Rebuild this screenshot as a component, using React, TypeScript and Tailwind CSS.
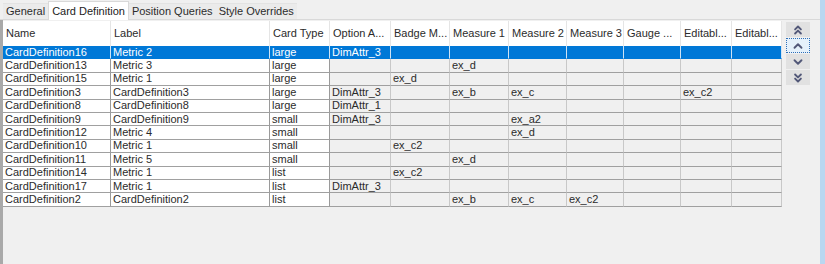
import { ChevronUp, ChevronDown, ChevronsUp, ChevronsDown } from 'lucide-react';

const columns = [
    { title: 'Name', width: 108, editable: true },
    { title: 'Label', width: 159, editable: true },
    { title: 'Card Type', width: 60, editable: true },
    { title: 'Option A...', width: 61, editable: false },
    { title: 'Badge M...', width: 59, editable: false },
    { title: 'Measure 1', width: 59, editable: false },
    { title: 'Measure 2', width: 58, editable: false },
    { title: 'Measure 3', width: 57, editable: false },
    { title: 'Gauge ...', width: 57, editable: false },
    { title: 'Editabl...', width: 51, editable: false },
    { title: 'Editabl...', width: 50, editable: false }
];

const rows: string[][] = [
    ['CardDefinition16', 'Metric 2', 'large', 'DimAttr_3', '', '', '', '', '', '', ''],
    ['CardDefinition13', 'Metric 3', 'large', '', '', 'ex_d', '', '', '', '', ''],
    ['CardDefinition15', 'Metric 1', 'large', '', 'ex_d', '', '', '', '', '', ''],
    ['CardDefinition3', 'CardDefinition3', 'large', 'DimAttr_3', '', 'ex_b', 'ex_c', '', '', 'ex_c2', ''],
    ['CardDefinition8', 'CardDefinition8', 'large', 'DimAttr_1', '', '', '', '', '', '', ''],
    ['CardDefinition9', 'CardDefinition9', 'small', 'DimAttr_3', '', '', 'ex_a2', '', '', '', ''],
    ['CardDefinition12', 'Metric 4', 'small', '', '', '', 'ex_d', '', '', '', ''],
    ['CardDefinition10', 'Metric 1', 'small', '', 'ex_c2', '', '', '', '', '', ''],
    ['CardDefinition11', 'Metric 5', 'small', '', '', 'ex_d', '', '', '', '', ''],
    ['CardDefinition14', 'Metric 1', 'list', '', 'ex_c2', '', '', '', '', '', ''],
    ['CardDefinition17', 'Metric 1', 'list', 'DimAttr_3', '', '', '', '', '', '', ''],
    ['CardDefinition2', 'CardDefinition2', 'list', '', '', 'ex_b', 'ex_c', 'ex_c2', '', '', '']
];

const tabs = ['General', 'Card Definition', 'Position Queries', 'Style Overrides'];

const gridCols =
    'grid-cols-[108px_159px_60px_61px_59px_59px_58px_57px_57px_51px_50px]';

const App = () => {
    return (
        <div
            className="relative h-[264px] w-[825px] overflow-hidden bg-[#f0f0f0] text-[11px] text-[#2b2b2b]"
            style={{ fontFamily: '"Liberation Sans", Arial, sans-serif' }}>
            {/* tab strip */}
            <div className="flex h-[20px] items-end border-b border-[#d9d9d9] pl-[3px]">
                {tabs.map((t, i) =>
                    i === 1 ? (
                        <div
                            key={t}
                            className="-mb-px flex h-[19px] items-center border-x border-t border-[#d9d9d9] bg-white px-[3px] text-[#222]">
                            {t}
                        </div>
                    ) : (
                        <div
                            key={t}
                            className="flex h-[16px] items-center border-t border-[#e3e3e3] bg-[#ebebeb] px-[3px] text-[#2b2b2b]">
                            {t}
                        </div>
                    )
                )}
            </div>

            {/* panel */}
            <div className="flex h-[244px] border-l-[3px] border-r-2 border-l-[#a9a9a9] border-r-[#d4d4d4] pr-[6px]">
                <div className="pt-px">
                    {/* header */}
                    <div className={`grid h-[25px] ${gridCols} bg-white`}>
                        {columns.map((c, i) => (
                            <div
                                key={i}
                                className="flex items-center overflow-hidden whitespace-nowrap border-r border-[#e5e5e5] px-[3px] text-[#2b2b2b]">
                                {c.title}
                            </div>
                        ))}
                    </div>
                    {/* rows */}
                    {rows.map((r, ri) => {
                        const selected = ri === 0;
                        return (
                            <div key={ri} className={`grid h-[13.4px] ${gridCols}`}>
                                {r.map((v, ci) => (
                                    <div
                                        key={ci}
                                        className={`flex items-center overflow-hidden whitespace-nowrap border-b border-r px-[2px] leading-none ${
                                            selected
                                                ? 'border-b-[#0078d7] border-r-[#cfe3f5] bg-[#0078d7] text-white'
                                                : columns[ci].editable
                                                  ? 'border-b-[#a0a0a0] border-r-[#9a9a9a] bg-white text-[#2b2b2b]'
                                                  : 'border-b-[#a0a0a0] border-r-[#c8c8c8] bg-[#f0f0f0] text-[#2b2b2b]'
                                        }`}>
                                        {v}
                                    </div>
                                ))}
                            </div>
                        );
                    })}
                </div>

                {/* move buttons */}
                <div className="ml-[4px] mt-[2px] flex w-[24px] flex-col gap-[1px]">
                    <button className="flex h-[15px] items-center justify-center bg-[#e1e1e1] text-[#525878]">
                        <ChevronsUp size={14} strokeWidth={3.2} />
                    </button>
                    <button className="flex h-[15px] items-center justify-center border border-dotted border-[#2f6fb7] bg-[#e5f1fb] text-[#525878]">
                        <ChevronUp size={14} strokeWidth={3.2} />
                    </button>
                    <button className="flex h-[15px] items-center justify-center bg-[#e1e1e1] text-[#525878]">
                        <ChevronDown size={14} strokeWidth={3.2} />
                    </button>
                    <button className="flex h-[15px] items-center justify-center bg-[#e1e1e1] text-[#525878]">
                        <ChevronsDown size={14} strokeWidth={3.2} />
                    </button>
                </div>
            </div>

            {/* window edge */}
            <div className="absolute right-0 top-0 h-full w-[5px] bg-[#b9d7f0]" />
        </div>
    );
};

export default App;
